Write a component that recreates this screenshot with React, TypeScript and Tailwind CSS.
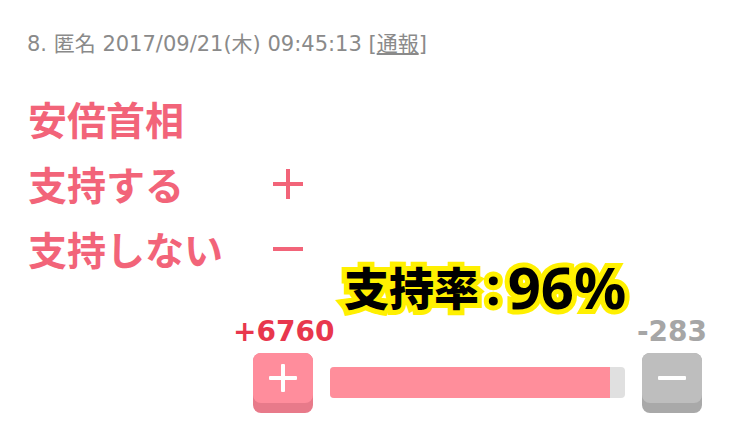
import React from "react";

const cjk = "font-['Noto_Sans_CJK_JP','Noto_Sans',sans-serif]";

export default function App() {
  return (
    <div className="w-[749px] h-[425px] bg-white overflow-hidden flex flex-col">
      <div className="pt-[32px] pl-[27px] text-[21px] leading-[24px] text-[#8a8a8a] font-['DejaVu_Sans','Noto_Sans_CJK_JP',sans-serif] whitespace-nowrap">
        8. 匿名 2017/09/21(木) 09:45:13 [<span className="underline underline-offset-2">通報</span>]
      </div>

      <div className={`mt-[30px] pl-[28px] grid grid-cols-[245px_auto] text-[39px] leading-[65px] font-bold text-[#f26479] ${cjk}`}>
        <div>安倍首相</div>
        <div></div>
        <div>支持する</div>
        <div className="flex items-center h-[65px]">
          <div className="relative w-[30px] h-[30px]">
            <div className="absolute left-0 top-[13px] w-[30px] h-[4px] bg-[#f26479]" />
            <div className="absolute left-[13px] top-0 w-[4px] h-[30px] bg-[#f26479]" />
          </div>
        </div>
        <div>支持しない</div>
        <div className="flex items-center h-[65px]">
          <div className="w-[30px] h-[4px] bg-[#f26479]" />
        </div>
      </div>

      <div className={`-mt-[19px] ml-[344px] h-[50px] flex items-center text-black font-black whitespace-nowrap [paint-order:stroke_fill] [-webkit-text-stroke:10px_#fff000] ${cjk}`}>
        <span className="text-[45px] leading-[50px]">支持率</span>
        <span className="text-[52px] leading-[50px] font-['Noto_Sans',sans-serif] font-bold mx-[7px] -mt-[4px]">:</span>
        <span className="text-[58px] leading-[50px] font-['Noto_Sans',sans-serif] font-bold">96%</span>
      </div>

      <div className="mt-[6px] ml-[233px] w-[474px] flex justify-between text-[28px] leading-[28px] font-bold font-['DejaVu_Sans',sans-serif]">
        <span className="text-[#e8374d]">+6760</span>
        <span className="text-[#a6a6a6]">-283</span>
      </div>

      <div className="mt-[7px] ml-[253px] flex items-start">
        <div className="w-[60px] h-[60px] rounded-[8px] bg-[#e87a8a] relative">
          <div className="h-[50px] rounded-[8px] bg-[#ff8d9c] flex items-center justify-center">
            <div className="relative w-[28px] h-[28px]">
              <div className="absolute left-0 top-[12px] w-[28px] h-[4px] rounded-[1px] bg-white" />
              <div className="absolute left-[12px] top-0 w-[4px] h-[28px] rounded-[1px] bg-white" />
            </div>
          </div>
        </div>
        <div className="ml-[17px] mt-[14px] w-[295px] h-[31px] rounded-[4px] bg-[#e0e0e0] overflow-hidden flex">
          <div className="h-full bg-[#ff8e9b]" style={{ width: `${Math.floor((6760 / (6760 + 283)) * 100)}%` }} />
        </div>
        <div className="ml-[17px] w-[60px] h-[60px] rounded-[8px] bg-[#a9a9a9]">
          <div className="h-[50px] rounded-[8px] bg-[#bebebe] flex items-center justify-center">
            <div className="w-[28px] h-[4px] rounded-[1px] bg-white" />
          </div>
        </div>
      </div>
    </div>
  );
}
